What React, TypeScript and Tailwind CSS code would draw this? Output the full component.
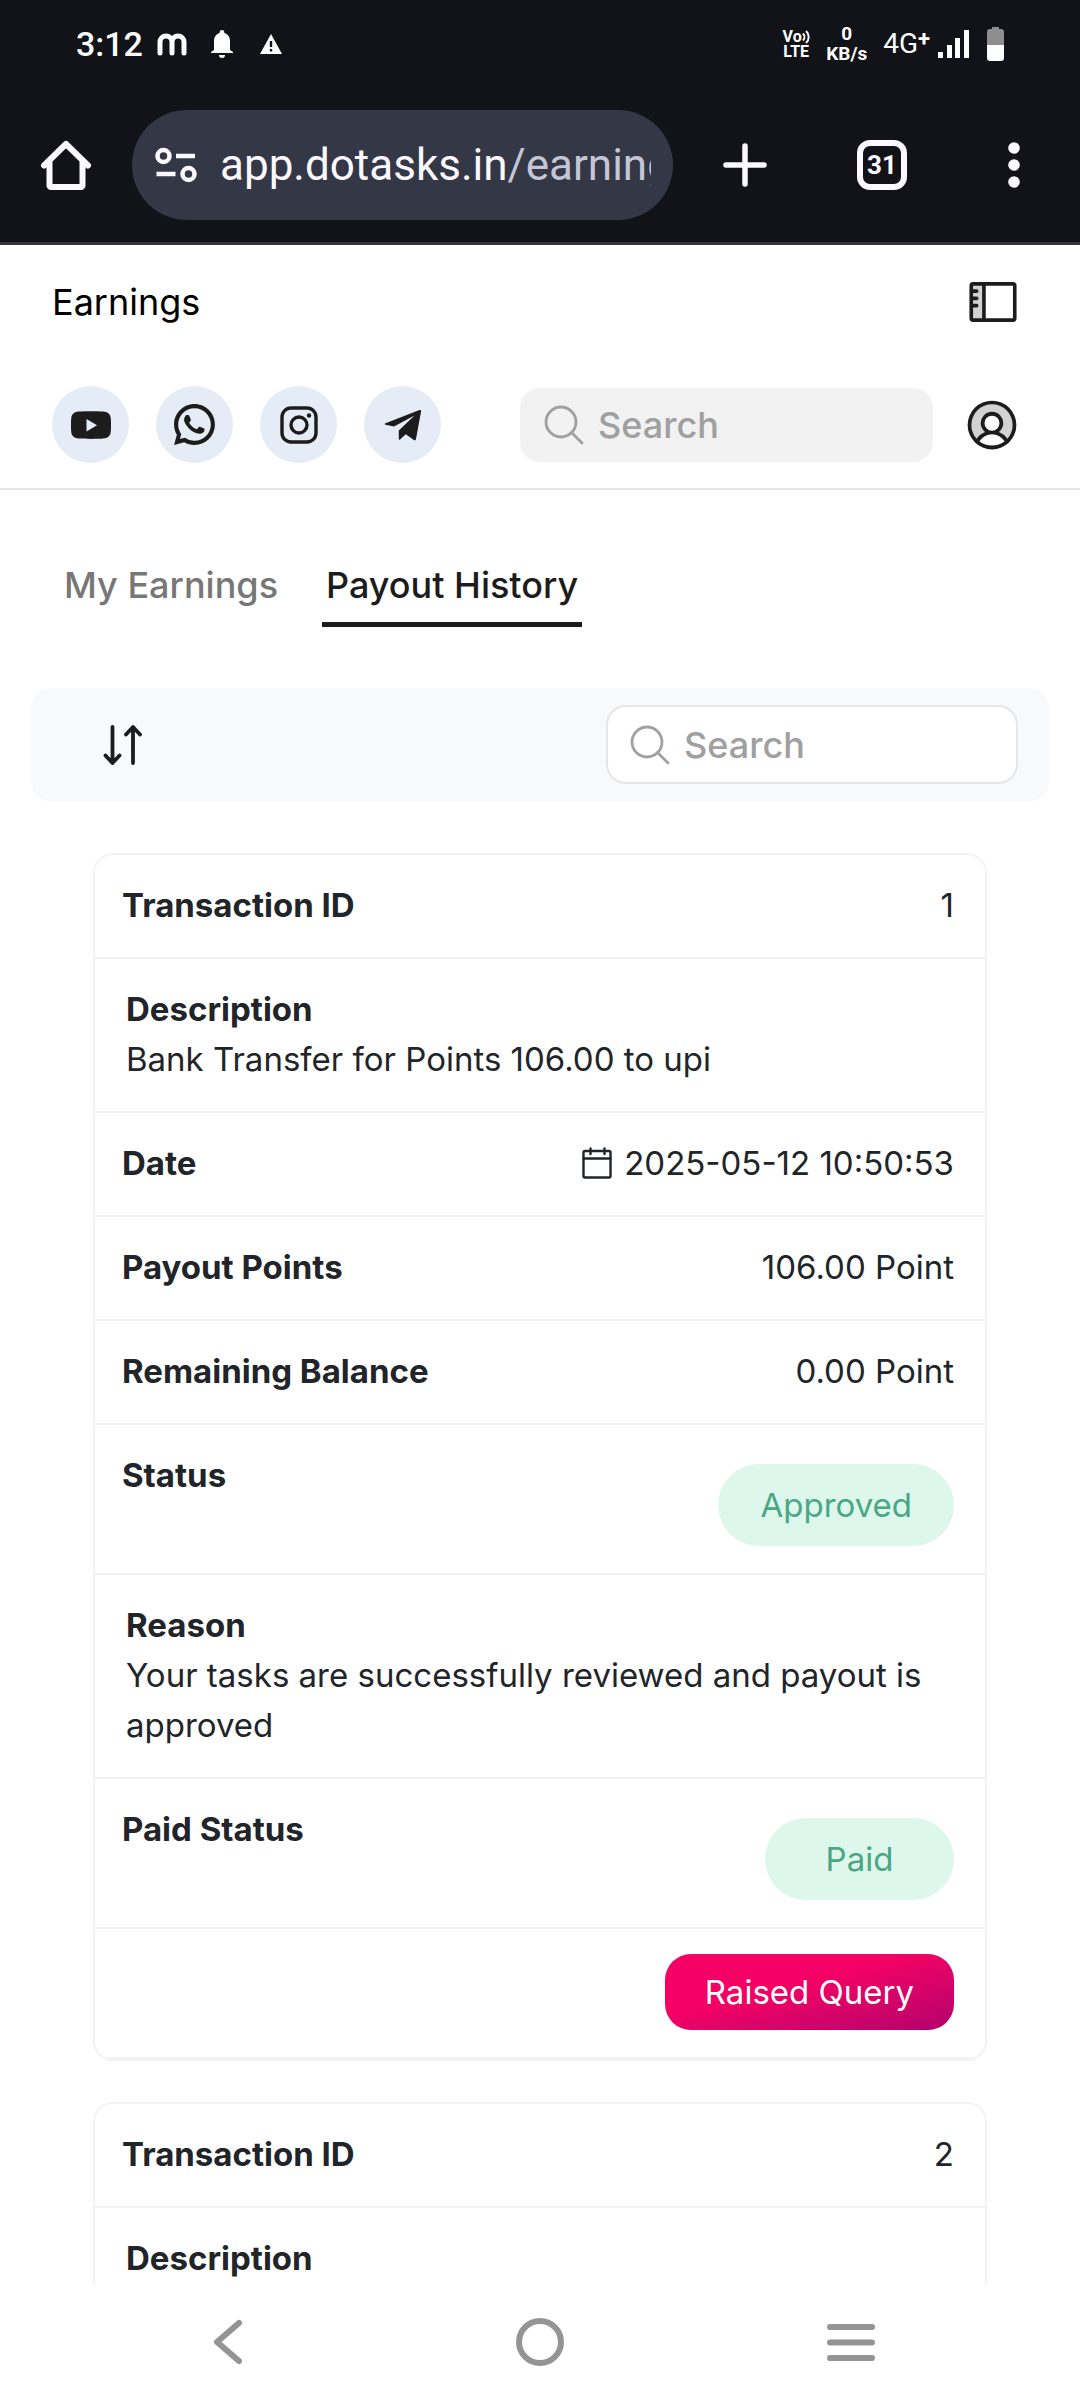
import { useState } from 'react';
import type { ReactNode } from 'react';
import { PiSidebarDuotone, PiUserCircleDuotone } from 'react-icons/pi';
import { RiWhatsappLine } from 'react-icons/ri';

interface Payout {
  id: number;
  description: string;
  date?: string;
  points?: string;
  balance?: string;
  status?: string;
  reason?: string;
  paidStatus?: string;
}

const payouts: Payout[] = [
  {
    id: 1,
    description: 'Bank Transfer for Points 106.00 to upi',
    date: '2025-05-12 10:50:53',
    points: '106.00 Point',
    balance: '0.00 Point',
    status: 'Approved',
    reason: 'Your tasks are successfully reviewed and payout is approved',
    paidStatus: 'Paid',
  },
  { id: 2, description: '' },
];

const tabs = ['My Earnings', 'Payout History'];

function StatusBar() {
  return (
    <div className="flex h-[88px] items-center justify-between pl-[76px] pr-[76px] font-['Roboto',sans-serif] text-white">
      <div className="flex items-center">
        <span className="text-[34px] font-medium leading-none">3:12</span>
        <svg className="ml-[14px] h-[24px] w-[30px]" viewBox="0 0 30 24" fill="none" stroke="currentColor" strokeWidth="5" strokeLinecap="round" aria-hidden="true">
          <path d="M3 21V10a6 6 0 0 1 12 0v11M15 10a6 6 0 0 1 12 0v11" />
        </svg>
        <svg className="ml-6 h-[28px] w-[22px]" viewBox="0 0 22 28" fill="currentColor" aria-hidden="true">
          <path d="M11 0a2.4 2.4 0 0 1 2.4 2.4v.5C17 4 19 7 19 11v9l3 2v1H0v-1l3-2v-9c0-4 2-7 5.600-8.100v-.5A2.400 2.400 0 0 1 11 0zM8 25h6a3 3 0 0 1-6 0z" />
        </svg>
        <svg className="ml-[27px] h-[20px] w-[22px]" viewBox="0 0 22 20" fill="currentColor" aria-hidden="true">
          <path fillRule="evenodd" d="M11 0l11 20H0zM9.800 7v6h2.400V7zM9.800 15v2.400h2.400V15z" />
        </svg>
      </div>
      <div className="flex items-center">
        <div className="flex w-[28px] flex-col items-center text-[16px] font-bold leading-[15px]">
          <div className="flex items-center">
            <span>Vo</span>
            <svg className="h-[14px] w-[8px]" viewBox="0 0 8 14" fill="none" stroke="currentColor" strokeWidth="2" aria-hidden="true">
              <path d="M1 3.500a5 5 0 0 1 0 7M4 1a8 8 0 0 1 0 12" />
            </svg>
          </div>
          <span>LTE</span>
        </div>
        <div className="ml-4 flex flex-col items-center text-[19px] font-bold leading-[20px]">
          <span>0</span>
          <span>KB/s</span>
        </div>
        <span className="ml-4 flex items-start text-[28px] leading-none">
          4G<span className="text-[22px] font-bold leading-[18px]">+</span>
        </span>
        <svg className="ml-[8px] h-[28px] w-[31px]" viewBox="0 0 31 28" fill="currentColor" aria-hidden="true">
          <path d="M0 22h5v6H0zM9 15h5v13H9zM17 8h5v20h-5zM26 0h5v28h-5z" />
        </svg>
        <svg className="ml-[18px] h-[34px] w-[17px]" viewBox="0 0 17 34" aria-hidden="true">
          <path fill="#8e8e90" d="M5 0h7v2h2a3 3 0 0 1 3 3v13H0V5a3 3 0 0 1 3-3h2z" />
          <path fill="#fff" d="M0 18h17v13a3 3 0 0 1-3 3H3a3 3 0 0 1-3-3z" />
        </svg>
      </div>
    </div>
  );
}

function BrowserBar() {
  return (
    <div className="flex h-[157px] items-center justify-between border-b-[3px] border-[#36363a] pl-[40px] pr-[60px] text-[#fbf9ff]">
      <button aria-label="Home" className="shrink-0">
        <svg className="h-[52px] w-[52px]" viewBox="0 0 52 52" fill="none" stroke="currentColor" strokeWidth="6" strokeLinejoin="round" strokeLinecap="round" aria-hidden="true">
          <path d="M4 26.500L26 5l22 21.500M9.500 23v23.500a1.500 1.500 0 0 0 1.500 1.500h30a1.500 1.500 0 0 0 1.500-1.500V23" />
        </svg>
      </button>
      <button
        aria-label="Address: app.dotasks.in/earnings"
        className="ml-[40px] flex h-[110px] min-w-0 flex-1 items-center rounded-full bg-[#343746] pl-[23px] pr-[22px] text-left"
      >
        <svg className="h-[36px] w-[42px] shrink-0" viewBox="0 0 42 36" fill="none" stroke="currentColor" strokeWidth="4.500" aria-hidden="true">
          <circle cx="8.500" cy="9" r="6" />
          <path d="M21 9h19M1.500 27h19" />
          <circle cx="33.500" cy="27" r="6" />
        </svg>
        <span className="ml-[23px] overflow-hidden whitespace-nowrap font-['Roboto',sans-serif] text-[44px] leading-[56px]">
          app.dotasks.in<span className="text-[#c4c6d6]">/earning</span>
        </span>
      </button>
      <button aria-label="New tab" className="ml-[50px] shrink-0">
        <svg className="h-[44px] w-[44px]" viewBox="0 0 44 44" stroke="currentColor" strokeWidth="5.500" strokeLinecap="round" aria-hidden="true">
          <path d="M22 3v38M3 22h38" />
        </svg>
      </button>
      <button
        aria-label="Switch tabs"
        className="ml-[90px] flex h-[50px] w-[50px] shrink-0 items-center justify-center rounded-[13px] border-[6px] border-current font-['Roboto',sans-serif] text-[26px] font-bold leading-none"
      >
        31
      </button>
      <button aria-label="Menu" className="ml-[101px] shrink-0">
        <svg className="h-[46px] w-[12px]" viewBox="0 0 12 46" fill="currentColor" aria-hidden="true">
          <circle cx="6" cy="6" r="5.800" />
          <circle cx="6" cy="23" r="5.800" />
          <circle cx="6" cy="40" r="5.800" />
        </svg>
      </button>
    </div>
  );
}

function SocialLink({ label, href, children }: { label: string; href: string; children: ReactNode }) {
  return (
    <a
      href={href}
      aria-label={label}
      className="flex h-[77px] w-[77px] items-center justify-center rounded-full bg-[#e5ecf6] text-[#1c1c1c]"
    >
      {children}
    </a>
  );
}

function SearchBox({ id, className }: { id: string; className: string }) {
  return (
    <label htmlFor={id} className={`flex items-center rounded-[20px] pr-4 ${className}`}>
      <svg className="h-[40px] w-[40px] shrink-0" viewBox="0 0 40 40" fill="none" stroke="#a0a0a0" strokeWidth="2.800" strokeLinecap="round" aria-hidden="true">
        <circle cx="17" cy="17" r="15" />
        <path d="M27.500 27.500L38 38" />
      </svg>
      <input
        id={id}
        type="text"
        placeholder="Search"
        aria-label="Search"
        className="ml-[14px] w-full min-w-0 bg-transparent text-[36px] font-medium leading-[44px] text-[#1c1c1c] outline-none placeholder:text-[#a0a0a0]"
      />
    </label>
  );
}

function PageHeader() {
  return (
    <header className="border-b-2 border-[#e4e4e4] pb-[25px] pl-[52px] pr-[58px] pt-[26px]">
      <div className="flex h-[62px] items-center justify-between">
        <h1 className="text-[36px] leading-[44px] text-black">Earnings</h1>
        <button aria-label="Toggle sidebar" className="text-[#1c1c1c]">
          <PiSidebarDuotone className="h-[58px] w-[58px]" />
        </button>
      </div>
      <div className="mt-[53px] flex items-center">
        <nav className="flex gap-[27px]">
          <SocialLink label="YouTube" href="#youtube">
            <svg className="h-[28px] w-[40px]" viewBox="0 0 40 28" fill="currentColor" aria-hidden="true">
              <path fillRule="evenodd" d="M8 .5C15 0 25 0 32 .5c5 .3 7.500 2.500 7.800 7 .3 4 .3 9 0 13-.3 4.500-2.800 6.700-7.800 7-7 .5-17 .5-24 0-5-.3-7.500-2.500-7.800-7-.3-4-.3-9 0-13C.5 3 3 .8 8 .5zM15.500 8v12.500L26 14.200z" />
            </svg>
          </SocialLink>
          <SocialLink label="WhatsApp" href="#whatsapp">
            <RiWhatsappLine className="h-[49px] w-[49px]" />
          </SocialLink>
          <SocialLink label="Instagram" href="#instagram">
            <svg className="h-[38px] w-[38px]" viewBox="0 0 38 38" fill="none" stroke="currentColor" strokeWidth="3.400" aria-hidden="true">
              <rect x="2" y="2" width="34" height="34" rx="9" />
              <circle cx="19" cy="19" r="8" />
              <circle cx="29" cy="9.500" r="2.200" fill="currentColor" stroke="none" />
            </svg>
          </SocialLink>
          <SocialLink label="Telegram" href="#telegram">
            <svg className="h-[32px] w-[38px]" viewBox="0 0 38 32" fill="currentColor" aria-hidden="true">
              <path d="M1.500 14.200L35.500 1c1-.4 1.800.2 1.600 1.300L32 30c-.2 1.200-1.300 1.600-2.200 1l-8-5.800-5.800 5.400c-.6.500-1.200.2-1.200-.6v-8.500L30.500 6.500 10 17.500l-8.500-1.800c-1-.3-1-1.100 0-1.500z" />
            </svg>
          </SocialLink>
        </nav>
        <SearchBox id="site-search" className="ml-[79px] h-[74px] min-w-0 flex-1 bg-[#f2f2f2] pl-6" />
        <button aria-label="Account" className="ml-[29px] text-[#1c1c1c]">
          <PiUserCircleDuotone className="h-[60px] w-[60px]" />
        </button>
      </div>
    </header>
  );
}

function SortIcon() {
  return (
    <svg className="h-[40px] w-[40px]" viewBox="0 0 40 40" fill="none" stroke="currentColor" strokeWidth="3.800" strokeLinecap="round" strokeLinejoin="round" aria-hidden="true">
      <path d="M9.500 2v36M2.500 30.500l7 7.500 7-7.500M30 38V2M23 9.500L30 2l7 7.500" />
    </svg>
  );
}

function CalendarIcon() {
  return (
    <svg className="h-[32px] w-[30px]" viewBox="0 0 30 32" fill="none" stroke="currentColor" strokeWidth="2.400" strokeLinecap="round" aria-hidden="true">
      <rect x="1.500" y="4" width="27" height="26.500" rx="1.500" />
      <path d="M1.500 11.500h27M8.500 1.500v5.500M22.500 1.500v5.500" />
    </svg>
  );
}

const rowClass = 'border-b-2 border-[#f3f3f3] align-top';
const labelClass = 'pt-[25px] pb-[27px] pl-[27px] text-left font-bold whitespace-nowrap';
const valueClass = 'pt-[25px] pb-[27px] pr-[31px] text-right';

function Row({ label, children }: { label: string; children: ReactNode }) {
  return (
    <tr className={rowClass}>
      <th scope="row" className={labelClass}>{label}</th>
      <td className={valueClass}>{children}</td>
    </tr>
  );
}

function WideRow({ label, text }: { label: string; text: string }) {
  return (
    <tr className={rowClass}>
      <td colSpan={2} className="px-[31px] pt-[25px] pb-[27px]">
        <strong className="block font-bold">{label}</strong>
        {text}
      </td>
    </tr>
  );
}

function Badge({ text }: { text: string }) {
  return (
    <span className="mt-[14px] inline-block min-w-[189px] rounded-full bg-[#def7ec] px-[42px] py-4 text-center align-top text-[#4aa785]">
      {text}
    </span>
  );
}

function PayoutCard({ payout }: { payout: Payout }) {
  return (
    <div className="overflow-hidden rounded-[20px] border-2 border-[#f3f3f3]">
      <table className="w-full border-collapse text-[33px] leading-[50px] text-[#212529]">
        <tbody>
          <Row label="Transaction ID">{payout.id}</Row>
          <WideRow label="Description" text={payout.description} />
          {payout.date && (
            <Row label="Date">
              <span className="flex items-center justify-end gap-3">
                <CalendarIcon /> {payout.date}
              </span>
            </Row>
          )}
          {payout.points && <Row label="Payout Points">{payout.points}</Row>}
          {payout.balance && <Row label="Remaining Balance">{payout.balance}</Row>}
          {payout.status && (
            <Row label="Status">
              <Badge text={payout.status} />
            </Row>
          )}
          {payout.reason && <WideRow label="Reason" text={payout.reason} />}
          {payout.paidStatus && (
            <>
              <Row label="Paid Status">
                <Badge text={payout.paidStatus} />
              </Row>
              <tr className={rowClass}>
                <td colSpan={2} className={valueClass}>
                  <button className="rounded-[26px] bg-linear-to-br from-[#f50064] from-40% to-[#b4006c] px-[40px] py-[13px] align-top text-white">
                    Raised Query
                  </button>
                </td>
              </tr>
            </>
          )}
        </tbody>
      </table>
    </div>
  );
}

function SystemNav() {
  return (
    <nav className="flex h-[116px] shrink-0 items-center justify-between bg-white px-[205px] text-[#949494]">
      <button aria-label="Back">
        <svg className="h-[48px] w-[48px]" viewBox="0 0 48 48" fill="none" stroke="currentColor" strokeWidth="6" strokeLinecap="round" strokeLinejoin="round" aria-hidden="true">
          <path d="M34 5L12 24l22 19" />
        </svg>
      </button>
      <button aria-label="Home screen" className="h-[48px] w-[48px] rounded-full border-[6px] border-current" />
      <button aria-label="Recent apps">
        <svg className="h-[48px] w-[48px]" viewBox="0 0 48 48" stroke="currentColor" strokeWidth="6" strokeLinecap="round" aria-hidden="true">
          <path d="M3 9h42M3 24.500h42M3 40h42" />
        </svg>
      </button>
    </nav>
  );
}

export default function App() {
  const [activeTab, setActiveTab] = useState('Payout History');

  return (
    <div className="flex h-screen flex-col bg-white font-['Inter',sans-serif] text-[#1c1c1c]">
      <div className="shrink-0 bg-[#121318]">
        <StatusBar />
        <BrowserBar />
      </div>

      <div className="min-h-0 flex-1 overflow-hidden">
        <PageHeader />

        <main className="px-[31px] pt-[61px]">
          <div className="flex gap-[40px] pl-[29px]" role="tablist">
            {tabs.map((tab) => (
              <button
                key={tab}
                role="tab"
                aria-selected={tab === activeTab}
                onClick={() => setActiveTab(tab)}
                className={`border-b-[5px] px-1 pb-[15px] pt-[12px] text-[36px] font-medium leading-[44px] ${
                  tab === activeTab ? 'border-[#1c1c1c] text-[#1c1c1c]' : 'border-transparent text-[#777777]'
                }`}
              >
                {tab}
              </button>
            ))}
          </div>

          {/* Sort and search */}
          <div className="mt-[61px] flex items-center justify-between rounded-[20px] bg-[#f7f9fb] py-[17px] pl-[72px] pr-[31px]">
            <button aria-label="Sort">
              <SortIcon />
            </button>
            <SearchBox id="payout-search" className="h-[79px] w-[412px] border-2 border-[#e6e6e6] bg-white pl-[22px]" />
          </div>

          <div className="flex flex-col gap-[41px] px-[62px] pt-[52px]">
            {payouts.map((payout) => (
              <PayoutCard key={payout.id} payout={payout} />
            ))}
          </div>
        </main>
      </div>

      <SystemNav />
    </div>
  );
}
